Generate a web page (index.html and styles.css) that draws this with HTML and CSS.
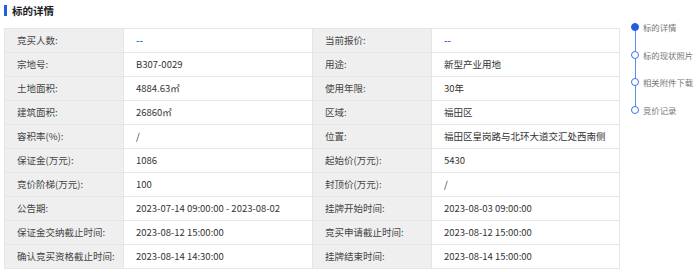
FILE: index.html
```html
<!DOCTYPE html>
<html lang="zh">
<head>
<meta charset="utf-8">
<link rel="stylesheet" href="styles.css">
</head>
<body>
<div class="page">
  <main class="main">
    <h2 class="title">标的详情</h2>
    <table class="info">
      <colgroup><col class="c1"><col class="c2"><col class="c3"><col class="c4"></colgroup>
      <tr><td class="lb">竞买人数:</td><td class="link">--</td><td class="lb">当前报价:</td><td class="link">--</td></tr>
      <tr><td class="lb">宗地号:</td><td>B307-0029</td><td class="lb">用途:</td><td>新型产业用地</td></tr>
      <tr><td class="lb">土地面积:</td><td>4884.63㎡</td><td class="lb">使用年限:</td><td>30年</td></tr>
      <tr><td class="lb">建筑面积:</td><td>26860㎡</td><td class="lb">区域:</td><td>福田区</td></tr>
      <tr><td class="lb">容积率(%):</td><td>/</td><td class="lb">位置:</td><td>福田区皇岗路与北环大道交汇处西南侧</td></tr>
      <tr><td class="lb">保证金(万元):</td><td>1086</td><td class="lb">起始价(万元):</td><td>5430</td></tr>
      <tr><td class="lb">竞价阶梯(万元):</td><td>100</td><td class="lb">封顶价(万元):</td><td>/</td></tr>
      <tr><td class="lb">公告期:</td><td>2023-07-14 09:00:00 - 2023-08-02</td><td class="lb">挂牌开始时间:</td><td>2023-08-03 09:00:00</td></tr>
      <tr><td class="lb">保证金交纳截止时间:</td><td>2023-08-12 15:00:00</td><td class="lb">竞买申请截止时间:</td><td>2023-08-12 15:00:00</td></tr>
      <tr><td class="lb">确认竞买资格截止时间:</td><td>2023-08-14 14:30:00</td><td class="lb">挂牌结束时间:</td><td>2023-08-14 15:00:00</td></tr>
    </table>
  </main>
  <nav class="steps">
    <div class="step active"><span class="dot"></span><span class="txt">标的详情</span></div>
    <div class="step"><span class="dot"></span><span class="txt">标的现状照片</span></div>
    <div class="step"><span class="dot"></span><span class="txt">相关附件下载</span></div>
    <div class="step"><span class="dot"></span><span class="txt">竞价记录</span></div>
  </nav>
</div>
</body>
</html>
```
FILE: styles.css
```css
html, body {
  margin: 0;
  padding: 0;
  background: #fff;
}
body {
  font-family: "Noto Sans CJK SC", "Noto Sans", sans-serif;
  color: #333;
}
.page {
  display: flex;
  align-items: flex-start;
  padding: 0 0 0 4px;
}
.main {
  width: 615px;
  flex: none;
}
.title {
  margin: 0;
  height: 22px;
  display: flex;
  align-items: center;
  font-size: 10.5px;
  font-weight: bold;
  color: #222;
  padding-left: 8px;
  border-left: 3px solid #1f5fe0;
  box-sizing: border-box;
  height: 11px;
  margin-top: 5px;
  margin-bottom: 12px;
  padding-left: 5px;
}
.info {
  width: 615px;
  border-collapse: collapse;
  table-layout: fixed;
  font-size: 9.5px;
}
.c1 { width: 119px; }
.c2 { width: 189px; }
.c3 { width: 119px; }
.c4 { width: 188px; }
.info td {
  height: 23px;
  padding: 0 0 0 12px;
  border: 1px solid #e6e6e6;
  white-space: nowrap;
  overflow: hidden;
  color: #333;
  line-height: 1;
}
.info td.lb {
  background: #efefef;
  color: #444;
}
.info td.link {
  color: #3b6fe6;
  font-weight: bold;
}
.steps {
  position: relative;
  margin-left: 12px;
  margin-top: 21px;
  display: flex;
  flex-direction: column;
  gap: 15.5px;
}
.steps::before {
  content: "";
  position: absolute;
  left: 3.5px;
  top: 6px;
  bottom: 6px;
  width: 1px;
  background: #5b8cf0;
}
.step {
  display: flex;
  align-items: center;
  height: 12px;
  gap: 4px;
}
.dot {
  position: relative;
  width: 6px;
  height: 6px;
  border: 1px solid #3d72ee;
  border-radius: 50%;
  background: #fff;
  flex: none;
}
.step.active .dot {
  background: #1f5fe0;
  border-color: #1f5fe0;
}
.txt {
  font-size: 8.4px;
  color: #777;
  white-space: nowrap;
}
```
